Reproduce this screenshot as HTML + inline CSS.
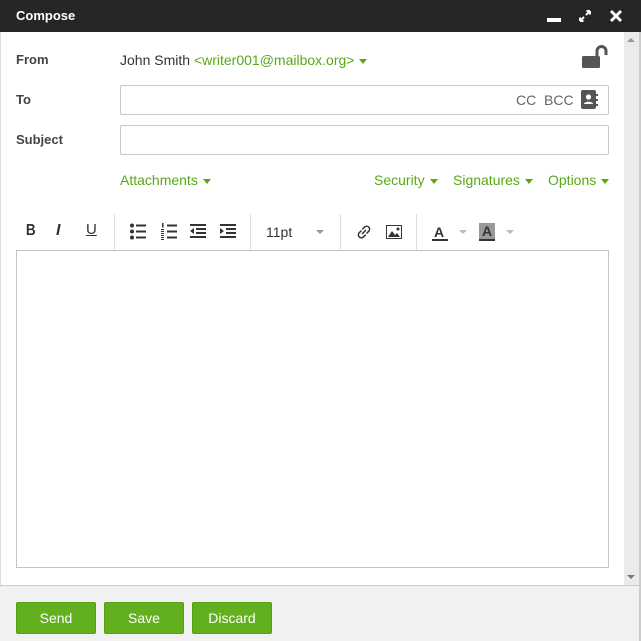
<!DOCTYPE html><html><head><style>
*{box-sizing:border-box;margin:0;padding:0}
body{width:641px;height:641px;overflow:hidden;font-family:"Liberation Sans",sans-serif;background:#fff;position:relative;font-size:14px;color:#333}
.a{position:absolute}
.g{color:#58a818}
.car{display:inline-block;width:0;height:0;border-left:4px solid transparent;border-right:4px solid transparent;border-top:5px solid #58a818;vertical-align:middle;margin-left:5px}
.lbl{font-weight:bold;font-size:13px;color:#444;left:16px}
.inp{left:120px;width:489px;height:30px;border:1px solid #c8c8c8;border-radius:2px}
.sep{width:1px;height:36px;background:#ddd;top:214px}
.btn{top:602px;width:80px;height:32px;background:#62b01e;border:1px solid #57a116;color:#fff;text-align:center;line-height:30px;font-size:14px;border-radius:2px}
.tb{color:#333;font-size:16px;font-weight:bold}
</style></head><body>
<div class="a" style="left:0;top:0;width:641px;height:32px;background:#262626"></div>
<div class="a" style="left:16px;top:8px;color:#fff;font-weight:bold;font-size:13px">Compose</div>
<div class="a" style="left:547px;top:18px;width:14px;height:4px;background:#fff"></div>
<svg class="a" style="left:578px;top:9px" width="14" height="14"><path d="M2 12L6 8M8 6L12 2M12 2H8.5M12 2V5.5M2 12H5.5M2 12V8.5" stroke="#fff" stroke-width="2" fill="none"/></svg>
<svg class="a" style="left:609px;top:9px" width="14" height="14"><path d="M2 2L12 12M12 2L2 12" stroke="#fff" stroke-width="3"/></svg>
<div class="a" style="left:624px;top:32px;width:15px;height:553px;background:#ebebeb"></div>
<div class="a" style="left:627px;top:38px;border-left:4px solid transparent;border-right:4px solid transparent;border-bottom:4px solid #999"></div>
<div class="a" style="left:627px;top:575px;border-left:4px solid transparent;border-right:4px solid transparent;border-top:4px solid #777"></div>
<div class="a" style="left:639px;top:32px;width:2px;height:609px;background:#ccc"></div>
<div class="a" style="left:0;top:32px;width:1px;height:609px;background:#ddd"></div>
<div class="a lbl" style="top:52px">From</div>
<div class="a" style="left:120px;top:52px">John Smith <span class="g">&lt;writer001@mailbox.org&gt;</span><span class="car"></span></div>
<svg class="a" style="left:581px;top:45px" width="28" height="24"><rect x="1" y="11" width="18" height="12" rx="1.5" fill="#555"/><path d="M16 11V6a4.5 4.5 0 0 1 9 0v4" stroke="#555" stroke-width="3" fill="none"/></svg>
<div class="a lbl" style="top:92px">To</div>
<div class="a inp" style="top:85px"></div>
<div class="a" style="left:516px;top:92px;color:#666">CC&nbsp;&nbsp;BCC</div>
<svg class="a" style="left:580px;top:90px" width="20" height="20"><rect x="1" y="0" width="15" height="19" rx="2" fill="#555"/><circle cx="8.5" cy="7" r="2.6" fill="#fff"/><path d="M4 14c0-3 9-3 9 0z" fill="#fff"/><rect x="16" y="4" width="2" height="2" fill="#555"/><rect x="16" y="9" width="2" height="2" fill="#555"/><rect x="16" y="14" width="2" height="2" fill="#555"/></svg>
<div class="a lbl" style="top:132px">Subject</div>
<div class="a inp" style="top:125px"></div>
<div class="a g" style="left:120px;top:172px">Attachments<span class="car"></span></div>
<div class="a g" style="left:374px;top:172px">Security<span class="car"></span></div>
<div class="a g" style="left:453px;top:172px">Signatures<span class="car"></span></div>
<div class="a g" style="left:548px;top:172px">Options<span class="car"></span></div>
<div class="a tb" style="left:25px;top:222px;transform:scaleX(0.85)">B</div>
<div class="a tb" style="left:56px;top:222px;font-style:italic">I</div>
<div class="a" style="left:86px;top:221px;font-size:15px;text-decoration:underline">U</div>
<div class="a sep" style="left:114px"></div>
<svg class="a" style="left:129px;top:223px" width="120" height="18"><g fill="#333"><circle cx="3" cy="2.5" r="2"/><circle cx="3" cy="8.5" r="2"/><circle cx="3" cy="14.5" r="2"/><rect x="7" y="1.5" width="10" height="2"/><rect x="7" y="7.5" width="10" height="2"/><rect x="7" y="13.5" width="10" height="2"/>
<rect x="38" y="1.5" width="10" height="2"/><rect x="38" y="7.5" width="10" height="2"/><rect x="38" y="13.5" width="10" height="2"/><rect x="33" y="0" width="1.5" height="4.5"/><rect x="32" y="6" width="3" height="1"/><rect x="32" y="8" width="3" height="1"/><rect x="32" y="10" width="3" height="1"/><rect x="32" y="12" width="3" height="1"/><rect x="32" y="14" width="3" height="1"/><rect x="32" y="16" width="3" height="1"/>
<rect x="61" y="1" width="16" height="2"/><rect x="67" y="5" width="10" height="2"/><rect x="67" y="9" width="10" height="2"/><rect x="61" y="13" width="16" height="2"/><path d="M65 5L61 8L65 11z"/>
<rect x="91" y="1" width="16" height="2"/><rect x="97" y="5" width="10" height="2"/><rect x="97" y="9" width="10" height="2"/><rect x="91" y="13" width="16" height="2"/><path d="M91 5L95 8L91 11z"/></g></svg>
<div class="a sep" style="left:250px"></div>
<div class="a" style="left:266px;top:224px;color:#333">11pt</div>
<div class="a" style="left:316px;top:230px;border-left:4px solid transparent;border-right:4px solid transparent;border-top:4px solid #999"></div>
<div class="a sep" style="left:340px"></div>
<svg class="a" style="left:355px;top:223px" width="18" height="18"><path d="M7 11l4-4M6.5 7.5l-2.5 2.5a3 3 0 0 0 4.2 4.2l2.5-2.5M11.5 10.5l2.5-2.5a3 3 0 0 0-4.2-4.2l-2.5 2.5" stroke="#333" stroke-width="1.5" fill="none"/></svg>
<svg class="a" style="left:386px;top:225px" width="16" height="14"><rect x="0.5" y="0.5" width="15" height="13" fill="none" stroke="#333"/><path d="M2 12l4-6 3 4 2-2 3 4z" fill="#333"/><circle cx="12" cy="4" r="1.5" fill="#333"/></svg>
<div class="a sep" style="left:416px"></div>
<div class="a" style="left:434px;top:224px;font-weight:bold;color:#333">A</div>
<div class="a" style="left:432px;top:239px;width:16px;height:2px;background:#333"></div>
<div class="a" style="left:459px;top:230px;border-left:4px solid transparent;border-right:4px solid transparent;border-top:4px solid #bbb"></div>
<div class="a" style="left:479px;top:223px;width:16px;height:16px;background:#999;color:#333;font-weight:bold;text-align:center;line-height:17px">A</div>
<div class="a" style="left:479px;top:239px;width:16px;height:2px;background:#333"></div>
<div class="a" style="left:506px;top:230px;border-left:4px solid transparent;border-right:4px solid transparent;border-top:4px solid #bbb"></div>
<div class="a" style="left:16px;top:250px;width:593px;height:318px;border:1px solid #c4c4c4"></div>
<div class="a" style="left:0;top:585px;width:639px;height:56px;background:#f1f1f1;border-top:1px solid #ccc"></div>
<div class="a btn" style="left:16px">Send</div>
<div class="a btn" style="left:104px">Save</div>
<div class="a btn" style="left:192px">Discard</div>
</body></html>
